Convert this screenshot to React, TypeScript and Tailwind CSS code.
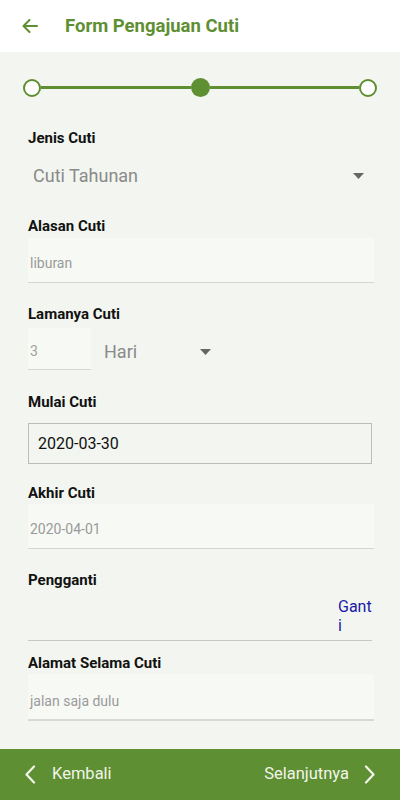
import React from "react";

const Tri = () => (
  <svg width="11" height="6" viewBox="0 0 11 6" className="block">
    <path d="M0 0 L11 0 L5.5 6 Z" fill="#666666" />
  </svg>
);

const Label = ({ children, className = "" }: { children: React.ReactNode; className?: string }) => (
  <div className={"h-5 text-[15px] leading-5 font-bold text-[#111111] " + className}>{children}</div>
);

export default function App() {
  return (
    <div
      className="w-[400px] h-[800px] flex flex-col bg-[#f3f6f0] overflow-hidden"
      style={{ fontFamily: "Roboto, 'Liberation Sans', sans-serif" }}
    >
      {/* Header */}
      <div className="h-[52px] bg-white flex items-center shrink-0">
        <div className="w-[65px] flex items-center pl-[22px]">
          <svg width="16" height="14" viewBox="0 0 16 14" fill="none">
            <path d="M15 7 H1.5 M7.5 1 L1.5 7 L7.5 13" stroke="#5e8f32" strokeWidth="2" strokeLinecap="round" strokeLinejoin="round" />
          </svg>
        </div>
        <div className="text-[18.5px] font-bold text-[#5e8f32] leading-6">Form Pengajuan Cuti</div>
      </div>

      {/* Stepper */}
      <div className="px-[23px] pt-[26px] flex items-center shrink-0">
        <div className="w-[18px] h-[18px] rounded-full border-[2.5px] border-[#5e8f32] bg-white shrink-0" />
        <div className="flex-1 h-[2.5px] bg-[#5e8f32]" />
        <div className="w-[19px] h-[19px] rounded-full bg-[#5e8f32] shrink-0" />
        <div className="flex-1 h-[2.5px] bg-[#5e8f32]" />
        <div className="w-[18px] h-[18px] rounded-full border-[2.5px] border-[#5e8f32] bg-white shrink-0" />
      </div>

      {/* Form */}
      <div className="flex-1 flex flex-col pl-[28px] pr-[26px]">
        <Label className="mt-[31px]">Jenis Cuti</Label>
        <div className="mt-[16px] h-6 flex items-center justify-between pl-[5px] pr-[10px]">
          <span className="text-[18px] leading-6 text-[#8a8a8a]">Cuti Tahunan</span>
          <Tri />
        </div>

        <Label className="mt-[28px]">Alasan Cuti</Label>
        <div className="mt-[2px] h-[45px] bg-[#f7f9f5] border-b border-[#d6d6d6] flex items-center pl-[2px] pt-[6px]">
          <span className="text-[14px] text-[#9a9a9a]">liburan</span>
        </div>

        <Label className="mt-[21px]">Lamanya Cuti</Label>
        <div className="mt-[4px] h-[42px] flex items-center">
          <div className="w-[63px] h-[42px] bg-[#f7f9f5] border-b border-[#d6d6d6] flex items-center pl-[2px] pt-[6px]">
            <span className="text-[14px] text-[#a0a0a0]">3</span>
          </div>
          <div className="ml-[13px] w-[107px] flex items-center justify-between pt-[6px]">
            <span className="text-[18px] leading-6 text-[#8a8a8a]">Hari</span>
            <Tri />
          </div>
        </div>

        <Label className="mt-[22px]">Mulai Cuti</Label>
        <div className="mt-[11px] mr-[2px] h-[41px] border border-[#bcbcbc] flex items-center pl-[9px]">
          <span className="text-[16px] text-[#111111]">2020-03-30</span>
        </div>

        <Label className="mt-[19px]">Akhir Cuti</Label>
        <div className="mt-[1px] h-[45px] bg-[#f7f9f5] border-b border-[#d6d6d6] flex items-center pl-[2px] pt-[6px]">
          <span className="text-[14px] text-[#9a9a9a]">2020-04-01</span>
        </div>

        <Label className="mt-[21px]">Pengganti</Label>
        <div className="mt-[6px] mr-[2px] h-[45px] border-b border-[#c8c8c8] flex justify-end">
          <div className="w-[34px] text-[16px] leading-[19px] text-[#1a1aa8] break-all pt-[1px]">Ganti</div>
        </div>

        <Label className="mt-[12px]">Alamat Selama Cuti</Label>
        <div className="mt-[1px] h-[47px] bg-[#f7f9f5] border-b-2 border-[#d8d8d8] flex items-center pl-[2px] pt-[10px]">
          <span className="text-[14px] text-[#9a9a9a]">jalan saja dulu</span>
        </div>
      </div>

      {/* Footer */}
      <div className="h-[51px] bg-[#5e8f32] flex items-center justify-between px-[24px] shrink-0">
        <div className="flex items-center">
          <svg width="12" height="19" viewBox="0 0 12 19" fill="none">
            <path d="M10 1.5 L2.5 9.5 L10 17.5" stroke="#f2f4ea" strokeWidth="2.2" strokeLinecap="round" strokeLinejoin="round" />
          </svg>
          <span className="ml-[16px] text-[16.5px] text-[#f2f4ea]">Kembali</span>
        </div>
        <div className="flex items-center">
          <span className="text-[16.5px] text-[#f2f4ea]">Selanjutnya</span>
          <svg className="ml-[15px]" width="12" height="19" viewBox="0 0 12 19" fill="none">
            <path d="M2 1.5 L9.5 9.5 L2 17.5" stroke="#f2f4ea" strokeWidth="2.2" strokeLinecap="round" strokeLinejoin="round" />
          </svg>
        </div>
      </div>
    </div>
  );
}
